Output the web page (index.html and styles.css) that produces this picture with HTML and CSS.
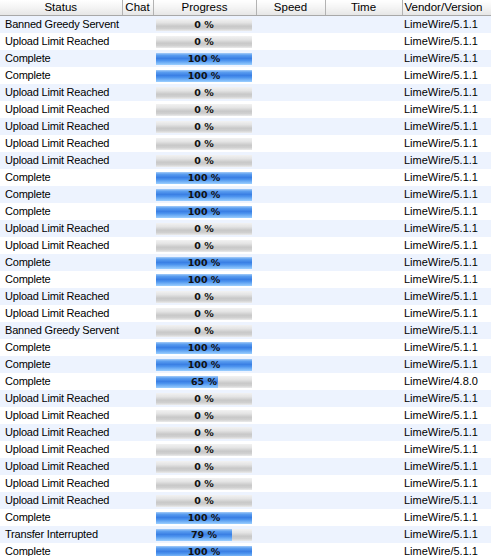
FILE: index.html
```html
<!DOCTYPE html>
<html lang="en">
<head>
    <meta charset="UTF-8">
    <title>Uploads</title>
    <link rel="stylesheet" href="styles.css">
</head>
<body>
    <table class="uploads">
        <colgroup>
            <col class="col-status">
            <col class="col-chat">
            <col class="col-progress">
            <col class="col-speed">
            <col class="col-time">
            <col class="col-vendor">
        </colgroup>
        <thead>
            <tr>
                <th>Status</th>
                <th>Chat</th>
                <th>Progress</th>
                <th>Speed</th>
                <th>Time</th>
                <th class="left">Vendor/Version</th>
            </tr>
        </thead>
        <tbody id="rows"></tbody>
    </table>
    <script>
        // status, percent, vendor
        const uploads = [
            ["Banned Greedy Servent", 0, "5.1.1"],
            ["Upload Limit Reached", 0, "5.1.1"],
            ["Complete", 100, "5.1.1"],
            ["Complete", 100, "5.1.1"],
            ["Upload Limit Reached", 0, "5.1.1"],
            ["Upload Limit Reached", 0, "5.1.1"],
            ["Upload Limit Reached", 0, "5.1.1"],
            ["Upload Limit Reached", 0, "5.1.1"],
            ["Upload Limit Reached", 0, "5.1.1"],
            ["Complete", 100, "5.1.1"],
            ["Complete", 100, "5.1.1"],
            ["Complete", 100, "5.1.1"],
            ["Upload Limit Reached", 0, "5.1.1"],
            ["Upload Limit Reached", 0, "5.1.1"],
            ["Complete", 100, "5.1.1"],
            ["Complete", 100, "5.1.1"],
            ["Upload Limit Reached", 0, "5.1.1"],
            ["Upload Limit Reached", 0, "5.1.1"],
            ["Banned Greedy Servent", 0, "5.1.1"],
            ["Complete", 100, "5.1.1"],
            ["Complete", 100, "5.1.1"],
            ["Complete", 65, "4.8.0"],
            ["Upload Limit Reached", 0, "5.1.1"],
            ["Upload Limit Reached", 0, "5.1.1"],
            ["Upload Limit Reached", 0, "5.1.1"],
            ["Upload Limit Reached", 0, "5.1.1"],
            ["Upload Limit Reached", 0, "5.1.1"],
            ["Upload Limit Reached", 0, "5.1.1"],
            ["Upload Limit Reached", 0, "5.1.1"],
            ["Complete", 100, "5.1.1"],
            ["Transfer Interrupted", 79, "5.1.1"],
            ["Complete", 100, "5.1.1"]
        ];

        const tbody = document.getElementById("rows");
        uploads.forEach(function(u) {
            const tr = document.createElement("tr");
            tr.innerHTML =
                '<td class="status">' + u[0] + '</td>' +
                '<td></td>' +
                '<td><div class="bar"><div class="fill" style="width: ' + u[1] + '%"></div>' +
                '<span class="pct">' + u[1] + ' %</span></div></td>' +
                '<td></td><td></td>' +
                '<td class="vendor">LimeWire/' + u[2] + '</td>';
            tbody.appendChild(tr);
        });
    </script>
</body>
</html>
```

FILE: styles.css
```css
body {
  margin: 0;
  background-color: #fff;
  font-family: "Liberation Sans", Arial, sans-serif;
  font-size: 11px;
  color: #000;
  overflow: hidden;
}

.uploads {
  width: 491px;
  table-layout: fixed;
  border-collapse: collapse;
}

.col-status { width: 122px; }
.col-chat { width: 31px; }
.col-progress { width: 103px; }
.col-speed { width: 69px; }
.col-time { width: 77px; }
.col-vendor { width: 89px; }

thead th {
  height: 15px;
  padding: 0;
  line-height: 15px;
  font-weight: normal;
  font-size: 11.5px;
  text-align: center;
  white-space: nowrap;
  overflow: hidden;
  background: linear-gradient(#ffffff, #f4f4f4 50%, #e6e6e6);
  border-right: 1px solid #b3b3b3;
  border-bottom: 1px solid #a8a8a8;
}

thead th.left {
  text-align: left;
  padding-left: 2px;
  border-right: none;
}

tbody td {
  height: 17px;
  padding: 0;
  line-height: 17px;
  white-space: nowrap;
  overflow: hidden;
}

tbody tr:nth-child(odd) {
  background-color: #edf3fe;
}

.status {
  padding-left: 5px !important;
  letter-spacing: -0.2px;
}

.vendor {
  padding-left: 2px !important;
}

.bar {
  position: relative;
  width: 96px;
  height: 12px;
  margin-left: 3px;
  background: linear-gradient(#f2f2f2, #e4e4e4 30%, #c8c8c8 60%, #d0d0d0 80%, #ebebeb);
}

.fill {
  height: 100%;
  background: linear-gradient(#a6cdf8, #5b9ef0 18%, #3a7fe4 45%, #4c93ee 62%, #7cb8f8 85%, #9ccfff);
}

/* percentage sits over the bar, centred on its full width */
.pct {
  position: absolute;
  top: 0;
  left: 0;
  right: 0;
  text-align: center;
  font-family: "DejaVu Sans", sans-serif;
  font-size: 9.5px;
  font-weight: bold;
  line-height: 12px;
  color: #111;
}
```
